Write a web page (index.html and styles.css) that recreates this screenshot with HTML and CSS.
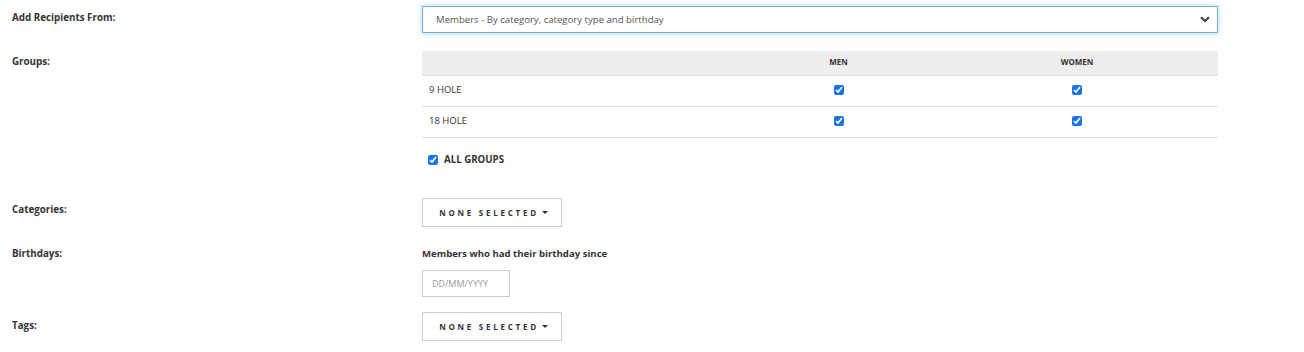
FILE: index.html
```html
<!DOCTYPE html>
<html>
<head>
<meta charset="utf-8">
<link rel="stylesheet" href="styles.css">
</head>
<body>
<div class="form">
  <div class="row row-source">
    <div class="label">Add Recipients From:</div>
    <div class="field">
      <div class="select">
        <span>Members - By category, category type and birthday</span>
        <svg class="chev" width="10" height="7" viewBox="0 0 10 7"><path d="M1 1.2 L5 5 L9 1.2" fill="none" stroke="#444" stroke-width="2.2"/></svg>
      </div>
    </div>
  </div>

  <div class="row row-groups">
    <div class="label">Groups:</div>
    <div class="field">
      <div class="table">
        <div class="tr th"><div class="td"></div><div class="td c">MEN</div><div class="td c">WOMEN</div><div class="td"></div></div>
        <div class="tr"><div class="td">9 HOLE</div><div class="td c"><input type="checkbox" checked></div><div class="td c"><input type="checkbox" checked></div><div class="td"></div></div>
        <div class="tr"><div class="td">18 HOLE</div><div class="td c"><input type="checkbox" checked></div><div class="td c"><input type="checkbox" checked></div><div class="td"></div></div>
      </div>
      <label class="all"><input type="checkbox" checked><span>ALL GROUPS</span></label>
    </div>
  </div>

  <div class="row row-cat">
    <div class="label">Categories:</div>
    <div class="field">
      <button class="ms">NONE SELECTED<span class="caret"></span></button>
    </div>
  </div>

  <div class="row row-bday">
    <div class="label">Birthdays:</div>
    <div class="field">
      <div class="sub">Members who had their birthday since</div>
      <input class="date" type="text" placeholder="DD/MM/YYYY">
    </div>
  </div>

  <div class="row row-tags">
    <div class="label">Tags:</div>
    <div class="field">
      <button class="ms">NONE SELECTED<span class="caret"></span></button>
    </div>
  </div>
</div>
</body>
</html>
```
FILE: styles.css
```css
* { box-sizing: border-box; }
html, body { margin: 0; padding: 0; background: #fff; }
body {
  font-family: "Open Sans", "Liberation Sans", sans-serif;
  font-size: 10px;
  color: #333;
}
.form { padding: 6px 86px 0 12px; }
.row { display: grid; grid-template-columns: 410px 796px; }
.label {
  font-weight: 700;
  color: #333;
  font-size: 9.8px;
  line-height: 14px;
}
.row-source .label { padding-top: 5px; }
.select {
  height: 27px;
  border: 1px solid #66afe9;
  box-shadow: 0 0 6px rgba(102,175,233,0.5);
  display: flex;
  align-items: center;
  justify-content: space-between;
  padding: 0 7px 0 13px;
  color: #555;
  font-size: 9.6px;
}
.chev { display: block; }
.row-groups { margin-top: 18px; }
.row-groups .label { padding-top: 4px; }
.table { border-bottom: 1px solid #ddd; }
.tr { display: grid; grid-template-columns: 297px 239px 238px 1fr; height: 31px; border-top: 1px solid #ddd; align-items: start; padding-top: 8px; }
.tr.th { background: #eee; border-top: 0; height: 24px; padding-top: 5px; font-weight: 700; color: #333; }
.td { padding-left: 7px; font-size: 9.5px; line-height: 12px; color: #333; }
.th .td { font-size: 8px; }
.td.c { padding-left: 0; text-align: center; display: flex; justify-content: center; height: 12px; align-items: center; }
input[type=checkbox] { width: 10px; height: 10px; margin: 0; accent-color: #1a73e8; }
.all { display: flex; align-items: center; margin: 15px 0 0 6px; font-weight: 700; font-size: 9.7px; color: #333; }
.all span { margin-left: 6px; }
.row-cat { margin-top: 32px; }
.row-cat .label { padding-top: 5px; }
.ms {
  width: 140px; height: 29px;
  background: #fff;
  border: 1px solid #ccc;
  font-family: "Open Sans", "Liberation Sans", sans-serif;
  font-weight: 700;
  font-size: 8px;
  letter-spacing: 2.75px;
  color: #333;
  padding: 0 0 0 3px;
  display: flex; align-items: center; justify-content: center;
}
.caret {
  display: inline-block;
  width: 0; height: 0;
  border-left: 3px solid transparent;
  border-right: 3px solid transparent;
  border-top: 3px solid #333;
  margin-left: 3px;
}
.row-bday { margin-top: 20px; }
.row-bday .label { padding-top: 0; }
.sub { font-weight: 700; font-size: 9.6px; line-height: 14px; color: #333; }
.date {
  display: block;
  margin-top: 9px;
  width: 88px; height: 27px;
  border: 1px solid #ccc;
  padding: 0 9px;
  font-family: "Open Sans", "Liberation Sans", sans-serif;
  font-size: 9px;
  outline: none;
}
.date::placeholder { color: #999; }
.row-tags { margin-top: 15px; }
.row-tags .label { padding-top: 7px; }
```
